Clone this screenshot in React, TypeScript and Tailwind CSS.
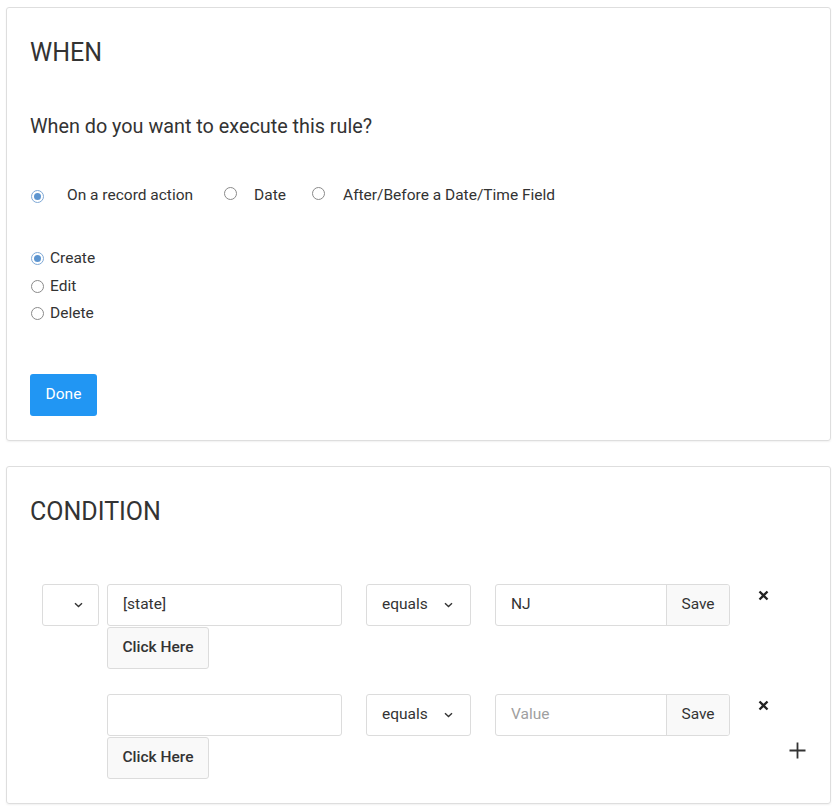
import React from "react";

function Radio({ checked }: { checked?: boolean }) {
  return (
    <span
      className={`inline-flex size-[13px] shrink-0 items-center justify-center rounded-full border ${
        checked ? "border-[#7fa9d6]" : "border-[#8a8a8a]"
      } bg-white`}
    >
      {checked && <span className="size-[7px] rounded-full bg-[#5d95d0]" />}
    </span>
  );
}

function Chevron() {
  return (
    <svg width="9" height="6" viewBox="0 0 9 6" fill="none" className="shrink-0">
      <path d="M1 1.2l3.5 3.3L8 1.2" stroke="#333" strokeWidth="1.4" />
    </svg>
  );
}

function Times() {
  return (
    <svg width="11" height="11" viewBox="0 0 11 11" className="shrink-0">
      <path d="M1.5 1.5l8 8M9.5 1.5l-8 8" stroke="#222" strokeWidth="2.3" />
    </svg>
  );
}

function Plus() {
  return (
    <svg width="17" height="17" viewBox="0 0 17 17" className="shrink-0">
      <path d="M8.5 0.5v16M0.5 8.5h16" stroke="#333" strokeWidth="1.8" />
    </svg>
  );
}

const field = "h-[42px] rounded-[3px] border border-[#dcdcdc] bg-white";

function ConditionRow({
  showField,
  attr,
  value,
  last,
}: {
  showField: boolean;
  attr: string;
  value: string;
  last?: boolean;
}) {
  return (
    <div className="flex items-start">
      {showField ? (
        <div className={`${field} flex w-[57px] items-center justify-end pr-[15px]`}>
          <Chevron />
        </div>
      ) : (
        <div className="w-[57px]" />
      )}
      <div className="ml-[8px] flex w-[235px] flex-col">
        <div className={`${field} flex items-center px-[15px]`}>{attr}</div>
        <button
          type="button"
          className="mt-px h-[42px] w-[102px] rounded-[3px] border border-[#dcdcdc] bg-[#f9f9f9] text-[15.5px] font-medium text-[#333]"
        >
          Click Here
        </button>
      </div>
      <div className={`${field} ml-[24px] flex w-[105px] items-center justify-between pl-[15px] pr-[17px]`}>
        <span>equals</span>
        <Chevron />
      </div>
      <div className={`${field} ml-[24px] flex w-[235px] overflow-hidden`}>
        <div className={`flex flex-1 items-center px-[15px] ${value ? "text-[#333]" : "text-[#a0a0a0]"}`}>
          {value || "Value"}
        </div>
        <div className="flex w-[63px] items-center justify-center border-l border-[#dcdcdc] bg-[#f9f9f9]">
          Save
        </div>
      </div>
      <div className="ml-[28px] flex flex-col pt-[6px]">
        <Times />
        {last && (
          <div className="ml-[31px] mt-[31px]">
            <Plus />
          </div>
        )}
      </div>
    </div>
  );
}

export default function App() {
  return (
    <div
      className="min-h-[811px] bg-white px-[6px] pt-[7px] text-[15.5px] text-[#333]"
      style={{ fontFamily: "Roboto, 'Noto Sans', sans-serif" }}
    >
      {/* WHEN */}
      <div className="w-[825px] rounded-[3px] border border-[#dedede] px-[23px] pb-[24px] pt-[30px] shadow-[0_1px_2px_rgba(0,0,0,0.06)]">
        <h2 className="text-[25px] leading-[30px] text-[#333]">WHEN</h2>
        <p className="mt-[45px] text-[19.8px] leading-[28px]">When do you want to execute this rule?</p>

        <div className="mt-[44px] flex h-[22px] items-center">
          <span className="ml-px"><Radio checked /></span>
          <span className="ml-[23px]">On a record action</span>
          <span className="ml-[31px]"><Radio /></span>
          <span className="ml-[17px]">Date</span>
          <span className="ml-[26px]"><Radio /></span>
          <span className="ml-[18px]">After/Before a Date/Time Field</span>
        </div>

        <div className="mt-[38px] flex flex-col">
          {[
            { label: "Create", checked: true },
            { label: "Edit" },
            { label: "Delete" },
          ].map(o => (
            <label key={o.label} className="flex h-[27.5px] items-center gap-[6px] pl-px">
              <Radio checked={o.checked} />
              <span>{o.label}</span>
            </label>
          ))}
        </div>

        <button
          type="button"
          className="mt-[46px] h-[42px] w-[67px] rounded-[3px] bg-[#2196f3] text-[15.5px] text-white"
        >
          Done
        </button>
      </div>

      {/* CONDITION */}
      <div className="mt-[25px] w-[825px] rounded-[3px] border border-[#dedede] px-[23px] pb-[24px] pt-[30px] shadow-[0_1px_2px_rgba(0,0,0,0.06)]">
        <h2 className="text-[25px] leading-[30px] text-[#333]">CONDITION</h2>
        <div className="mt-[57px] flex flex-col gap-[25px] pl-[12px]">
          <ConditionRow showField attr="[state]" value="NJ" />
          <ConditionRow showField={false} attr="" value="" last />
        </div>
      </div>
    </div>
  );
}
